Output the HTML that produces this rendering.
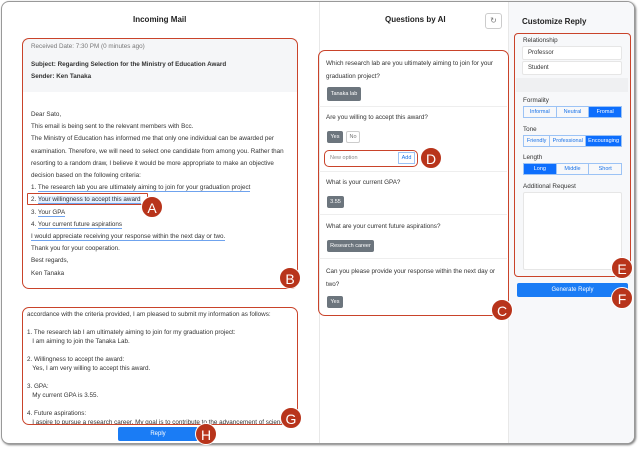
<!DOCTYPE html>
<html><head><meta charset="utf-8"><style>
*{box-sizing:border-box;margin:0;padding:0}
body{width:640px;height:449px;background:#fff;font-family:"Liberation Sans",sans-serif;position:relative;overflow:hidden;color:#222}
.win{position:absolute;left:1px;top:1px;width:634px;height:443px;border:1px solid #999;border-radius:8px;box-shadow:1px 1px 2px #777;background:#fff;overflow:hidden}
.a{position:absolute;white-space:nowrap}
.t{font-size:6.3px;color:#333}
.red{position:absolute;border:1.5px solid #c9432a;border-radius:7px}
.c{position:absolute;width:22px;height:22px;border-radius:50%;background:#b8341b;color:#fff;font-size:14px;line-height:22px;text-align:center;border:1px solid #fff}
.ul{border-bottom:1px solid #6fa3ee}
.chip{position:absolute;background:#6c757d;color:#fff;font-size:5.5px;border-radius:2px;text-align:center}
.sep{position:absolute;height:1px;background:#eee}
.seg{position:absolute;display:flex;border:1px solid #9cc3f5;height:12px}
.seg div{flex:1;font-size:5.5px;color:#1a73e8;text-align:center;line-height:10px;border-right:1px solid #9cc3f5}
.seg div:last-child{border-right:0}
.seg .on{background:#0d6efd;color:#fff}
.inp{position:absolute;background:#fff;border:1px solid #e6e6e6;border-radius:2px;font-size:6px;padding-left:5px;color:#333}
</style></head><body>
<div class="win">
<div class="a" style="left:506px;top:0;width:130px;height:445px;background:#f7f8fa;border-left:1px solid #e8e8e8"></div>
<div class="a" style="left:317px;top:0;width:1px;height:445px;background:#e8e8e8"></div>
</div>
<!-- left -->
<div class="a" style="left:133px;top:15px;font-size:8px;font-weight:bold">Incoming Mail</div>
<div class="a" style="left:23px;top:39px;width:274px;height:53px;background:#f5f6f8"></div>
<div class="a t" style="left:31px;top:43px;color:#777">Received Date: 7:30 PM (0 minutes ago)</div>
<div class="a t" style="left:31px;top:61px;font-weight:bold">Subject: Regarding Selection for the Ministry of Education Award</div>
<div class="a t" style="left:31px;top:73px;font-weight:bold">Sender: Ken Tanaka</div>
<div class="a t" style="left:31px;top:109px;line-height:12.2px">Dear Sato,<br>This email is being sent to the relevant members with Bcc.<br>The Ministry of Education has informed me that only one individual can be awarded per<br>examination. Therefore, we will need to select one candidate from among you. Rather than<br>resorting to a random draw, I believe it would be more appropriate to make an objective<br>decision based on the following criteria:<br>1. <span class="ul">The research lab you are ultimately aiming to join for your graduation project</span><br>2. <span class="ul" style="background:#e3efff">Your willingness to accept this award</span><br>3. <span class="ul">Your GPA</span><br>4. <span class="ul">Your current future aspirations</span><br><span class="ul">I would appreciate receiving your response within the next day or two.</span><br>Thank you for your cooperation.<br>Best regards,<br>Ken Tanaka</div>
<div class="red" style="left:22px;top:38px;width:276px;height:251px"></div>
<div class="red" style="left:27px;top:193px;width:121px;height:12px;border-radius:1px"></div>
<div class="c" style="left:141px;top:196px">A</div>
<div class="c" style="left:279px;top:267px">B</div>
<div class="a" style="left:23px;top:308px;width:274px;height:116px;overflow:hidden">
<div class="a t" style="left:4px;top:2px;line-height:9px">accordance with the criteria provided, I am pleased to submit my information as follows:<br><br>1. The research lab I am ultimately aiming to join for my graduation project:<br>&nbsp;&nbsp;&nbsp;I am aiming to join the Tanaka Lab.<br><br>2. Willingness to accept the award:<br>&nbsp;&nbsp;&nbsp;Yes, I am very willing to accept this award.<br><br>3. GPA:<br>&nbsp;&nbsp;&nbsp;My current GPA is 3.55.<br><br>4. Future aspirations:<br>&nbsp;&nbsp;&nbsp;I aspire to pursue a research career. My goal is to contribute to the advancement of science.</div></div>
<div class="red" style="left:22px;top:307px;width:276px;height:118px"></div>
<div class="c" style="left:280px;top:407px">G</div>
<div class="a" style="left:118px;top:427px;width:80px;height:14px;background:#1a7cf5;border-radius:2px;color:#fff;font-size:6px;text-align:center;line-height:14px">Reply</div>
<div class="c" style="left:195px;top:423px">H</div>
<!-- middle -->
<div class="a" style="left:385px;top:15px;font-size:8px;font-weight:bold">Questions by AI</div>
<div class="a" style="left:485px;top:13px;width:17px;height:16px;border:1px solid #ccc;border-radius:3px;font-size:8px;color:#777;text-align:center;line-height:14px">↻</div>
<div class="a t" style="left:326px;top:58px;line-height:12.5px">Which research lab are you ultimately aiming to join for your<br>graduation project?</div>
<div class="chip" style="left:327px;top:87px;width:34px;height:14px;line-height:14px">Tanaka lab</div>
<div class="sep" style="left:319px;top:106px;width:188px"></div>
<div class="a t" style="left:326px;top:114px">Are you willing to accept this award?</div>
<div class="chip" style="left:327px;top:131px;width:16px;height:12px;line-height:12px">Yes</div>
<div class="a" style="left:346px;top:131px;width:14px;height:12px;border:1px solid #ccc;border-radius:2px;font-size:5.5px;color:#777;text-align:center;line-height:10px">No</div>
<div class="a" style="left:324px;top:150px;width:94px;height:17px;border:1.5px solid #c9432a;border-radius:5px;background:#fff"></div>
<div class="a" style="left:330px;top:155px;font-size:5.5px;color:#888">New option</div>
<div class="a" style="left:398px;top:152px;width:17px;height:12px;border:1px solid #9cc3f5;font-size:5.5px;color:#1a73e8;text-align:center;line-height:10px">Add</div>
<div class="c" style="left:420px;top:147px">D</div>
<div class="sep" style="left:319px;top:171px;width:188px"></div>
<div class="a t" style="left:326px;top:179px">What is your current GPA?</div>
<div class="chip" style="left:327px;top:196px;width:17px;height:12px;line-height:12px">3.55</div>
<div class="sep" style="left:319px;top:214px;width:188px"></div>
<div class="a t" style="left:326px;top:223px">What are your current future aspirations?</div>
<div class="chip" style="left:327px;top:240px;width:47px;height:12px;line-height:12px">Research career</div>
<div class="sep" style="left:319px;top:258px;width:188px"></div>
<div class="a t" style="left:326px;top:266px;line-height:12.5px">Can you please provide your response within the next day or<br>two?</div>
<div class="chip" style="left:327px;top:296px;width:16px;height:12px;line-height:12px">Yes</div>
<div class="red" style="left:318px;top:50px;width:191px;height:266px"></div>
<div class="c" style="left:491px;top:299px">C</div>
<!-- right -->
<div class="a" style="left:522px;top:17px;font-size:8px;font-weight:bold">Customize Reply</div>
<div class="a t" style="left:523px;top:37px">Relationship</div>
<div class="inp" style="left:522px;top:46px;width:100px;height:14px;line-height:12px">Professor</div>
<div class="inp" style="left:522px;top:61px;width:100px;height:14px;line-height:12px">Student</div>
<div class="a" style="left:516px;top:78px;width:112px;height:14px;background:#eff0f2"></div>
<div class="a t" style="left:523px;top:97px">Formality</div>
<div class="seg" style="left:523px;top:106px;width:99px"><div>Informal</div><div>Neutral</div><div class="on">Fromal</div></div>
<div class="a t" style="left:523px;top:126px">Tone</div>
<div class="seg" style="left:523px;top:135px;width:99px"><div style="flex:.8">Friendly</div><div style="flex:1.1">Professional</div><div class="on" style="flex:1.1">Encouraging</div></div>
<div class="a t" style="left:523px;top:154px">Length</div>
<div class="seg" style="left:523px;top:163px;width:99px"><div class="on">Long</div><div>Middle</div><div>Short</div></div>
<div class="a t" style="left:523px;top:183px">Additional Request</div>
<div class="inp" style="left:523px;top:192px;width:99px;height:78px"></div>
<div class="red" style="left:514px;top:33px;width:117px;height:244px;border-radius:4px"></div>
<div class="c" style="left:611px;top:257px">E</div>
<div class="a" style="left:517px;top:283px;width:111px;height:14px;background:#1a7cf5;border-radius:2px;color:#fff;font-size:6px;text-align:center;line-height:14px">Generate Reply</div>
<div class="c" style="left:611px;top:287px">F</div>
</body></html>
